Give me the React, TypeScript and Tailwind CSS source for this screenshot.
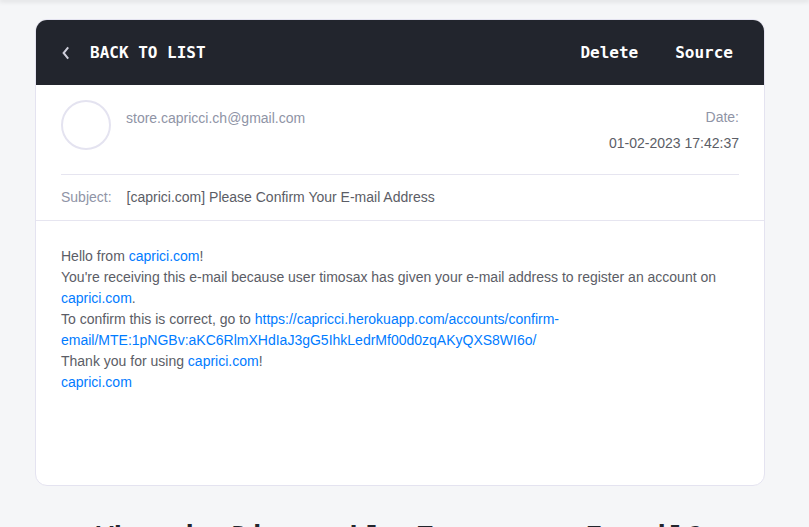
import type { ReactNode } from 'react';

function MailLink({ href = '#', children }: { href?: string; children: ReactNode }) {
  return (
    <a href={href} className="text-[#007bff] hover:underline">
      {children}
    </a>
  );
}

function Toolbar() {
  return (
    <header className="flex h-[65px] items-center justify-between bg-[#22252d] pr-[31px] pl-6 font-['DejaVu_Sans_Mono',monospace] text-base font-bold text-white">
      <button type="button" className="flex items-center gap-5">
        <svg viewBox="0 0 10 14" className="h-3.5 w-2.5" fill="none" stroke="#cdcdd9" strokeWidth="2" aria-hidden="true">
          <path d="M8.2 1.4 3.6 7l4.6 5.6" />
        </svg>
        BACK TO LIST
      </button>
      <div className="flex gap-[37px]">
        <button type="button">Delete</button>
        <button type="button">Source</button>
      </div>
    </header>
  );
}

function MessageInfo() {
  return (
    <div className="border-b border-[#e6e5f0]">
      <div className="mx-[25px] flex border-b border-[#e6e5f0] pt-[15px] pb-[18px]">
        <div className="size-[50px] shrink-0 rounded-full border-2 border-[#e4e3f0]" />
        <p className="grow pt-2 pl-[15px] text-[#8f94a6]">store.capricci.ch@gmail.com</p>
        <dl className="text-right leading-[26px]">
          <dt className="pt-1 text-[#8f94a6]">Date:</dt>
          <dd>01-02-2023 17:42:37</dd>
        </dl>
      </div>
      <dl className="mx-[25px] flex gap-[15px] py-3">
        <dt className="text-[#8f94a6]">Subject:</dt>
        <dd>[caprici.com] Please Confirm Your E-mail Address</dd>
      </dl>
    </div>
  );
}

function MessageBody() {
  return (
    <div className="min-h-[264px] p-[25px]">
      <p>
        Hello from <MailLink>caprici.com</MailLink>!
      </p>
      <p>
        You're receiving this e-mail because user timosax has given your e-mail address to register an account on{' '}
        <MailLink>caprici.com</MailLink>.
      </p>
      <p>
        To confirm this is correct, go to{' '}
        <MailLink>
          https://capricci.herokuapp.com/accounts/confirm-email/MTE:1pNGBv:aKC6RlmXHdIaJ3gG5IhkLedrMf00d0zqAKyQXS8WI6o/
        </MailLink>
      </p>
      <p>
        Thank you for using <MailLink>caprici.com</MailLink>!
      </p>
      <p>
        <MailLink>caprici.com</MailLink>
      </p>
    </div>
  );
}

export default function App() {
  return (
    <div className="h-screen overflow-hidden bg-[#f5f6f8] font-['Liberation_Sans',Arial,sans-serif] text-sm leading-[21px] text-[#5b5d66]">
      <div className="h-0 shadow-[0_0_5px_1px_rgba(0,0,0,0.18)]" />
      <main className="pt-[19px] pr-11 pl-[35px]">
        <article className="overflow-hidden rounded-xl border border-[#e4e3f0] bg-white">
          <Toolbar />
          <MessageInfo />
          <MessageBody />
        </article>
        <h1 className="pt-[34px] text-center font-['DejaVu_Sans_Mono',monospace] text-[28px] leading-9 font-bold text-[#22252d]">
          What is Disposable Temporary E-mail?
        </h1>
      </main>
    </div>
  );
}
